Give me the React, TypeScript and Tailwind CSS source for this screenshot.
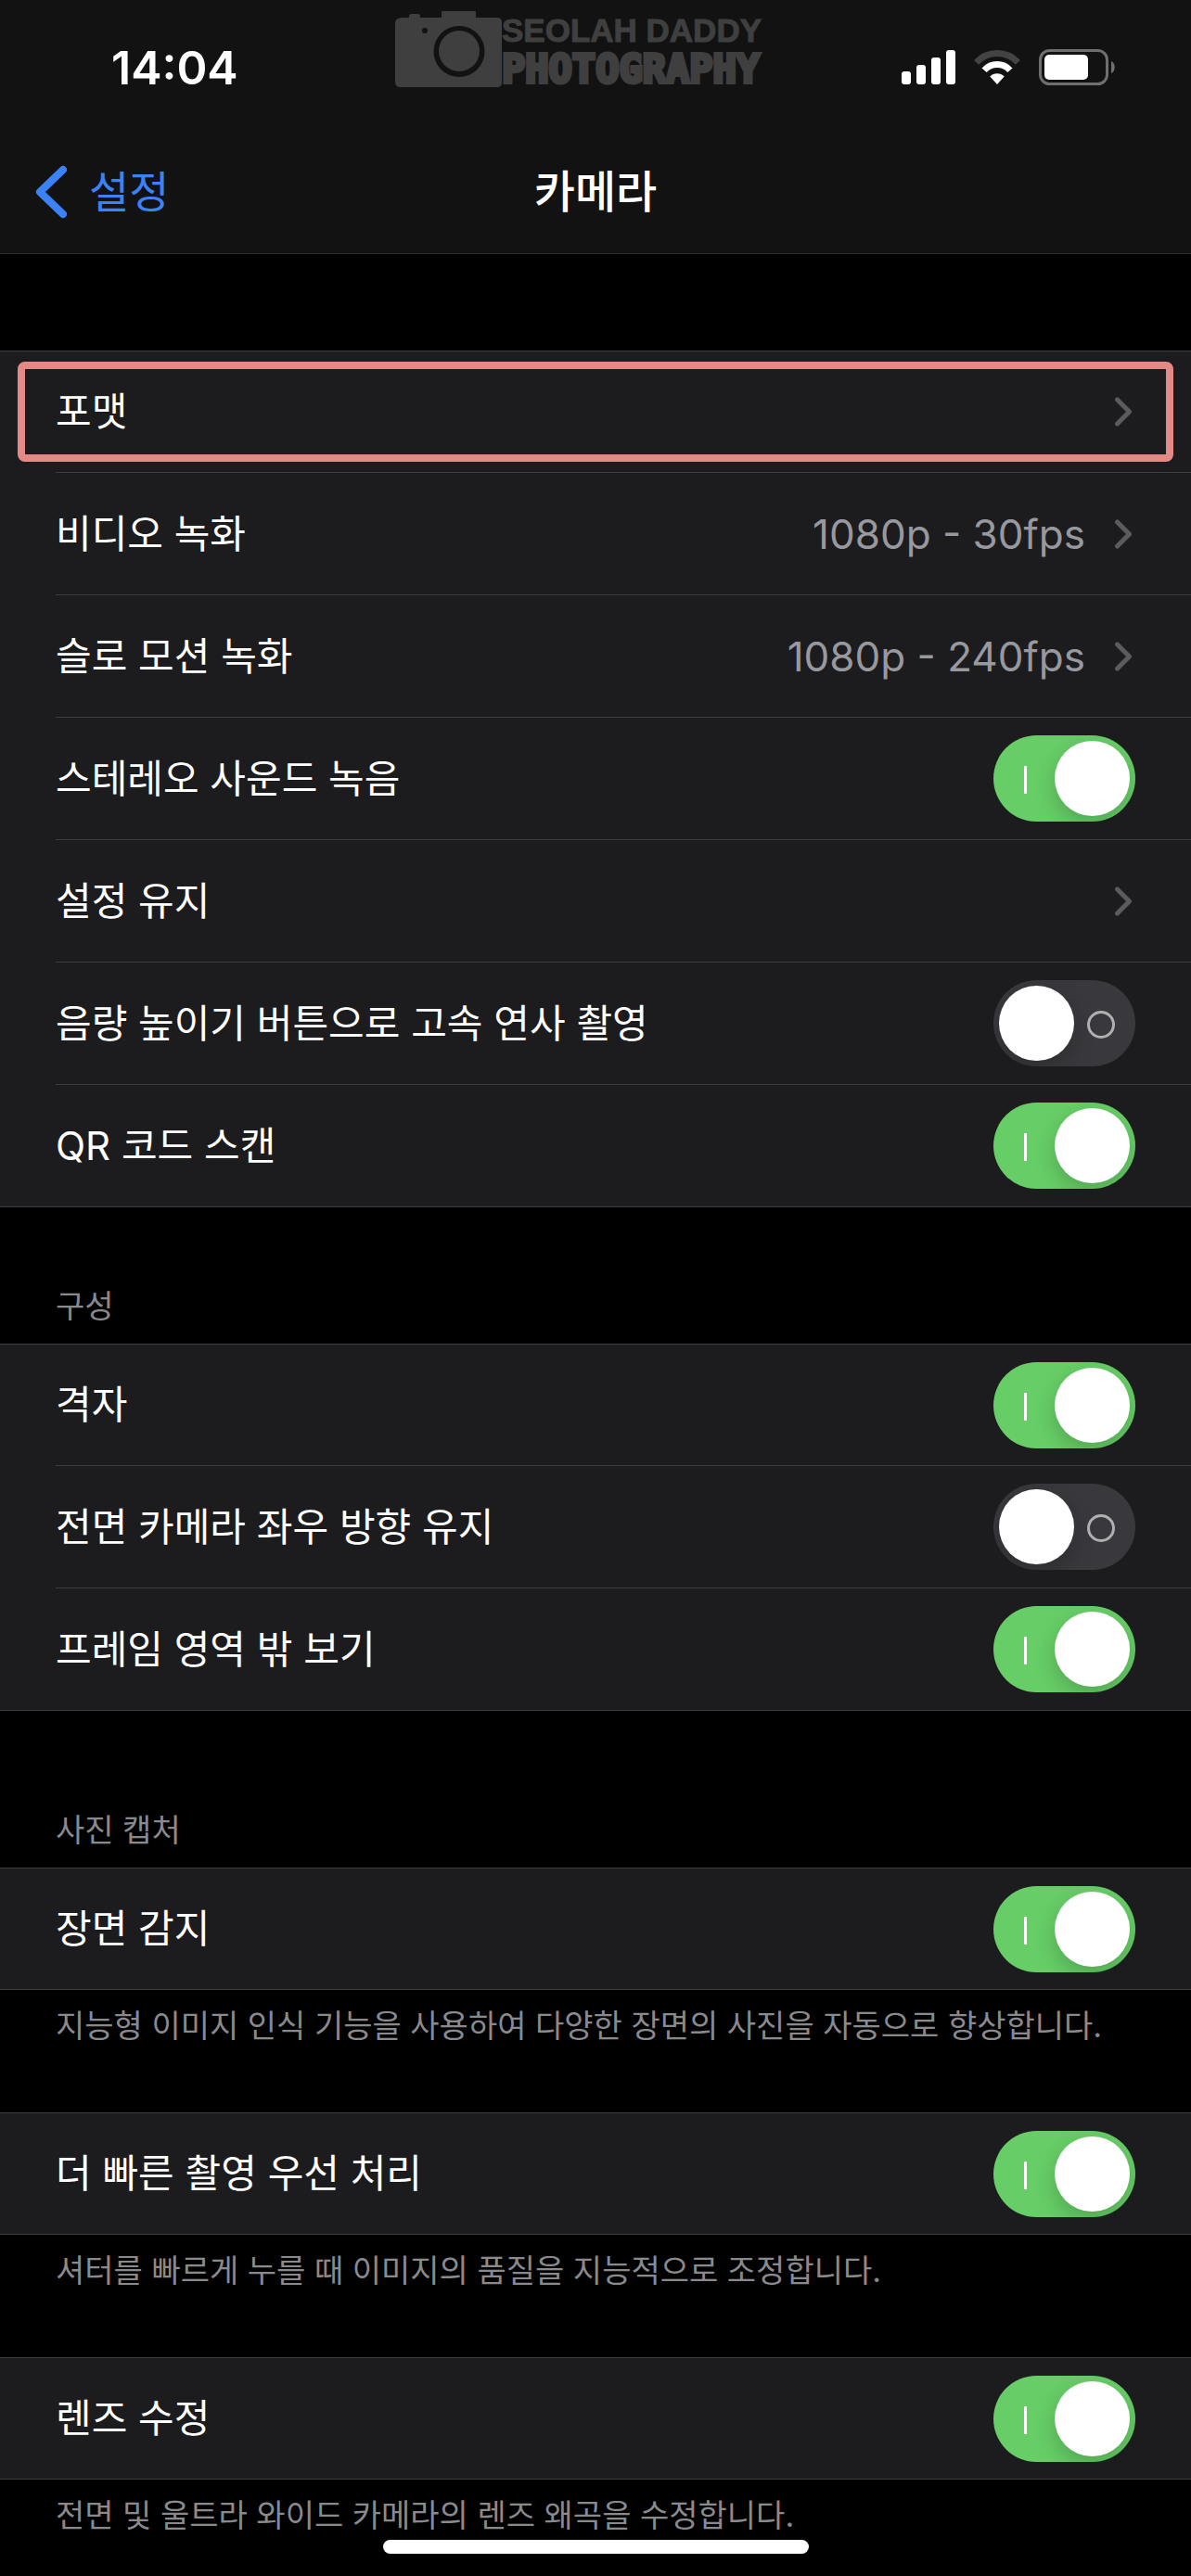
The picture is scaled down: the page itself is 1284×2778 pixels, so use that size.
import { useId, useState, type ReactNode } from 'react';

type RowProps = {
  first?: boolean;
  last?: boolean;
  children: ReactNode;
};

// One list line: outer hairlines run full width, inner ones start at the label
function Row({ first = false, last = false, children }: RowProps) {
  return (
    <li
      className={`relative flex min-h-[132px] bg-[#1c1c1e] pl-[60px] border-[#3d3d41] ${first ? 'border-t' : ''} ${
        last ? 'border-b' : ''
      }`}
    >
      <div
        className={`flex flex-1 items-center justify-between pr-[60px] border-[#3d3d41] ${last ? '' : 'border-b'}`}
      >
        {children}
      </div>
    </li>
  );
}

function Chevron() {
  return (
    <svg width="22" height="34" viewBox="0 0 22 34" fill="none" aria-hidden="true">
      <path
        d="M2.5 4 L15.5 17 L2.5 30"
        stroke="#5b5b5f"
        strokeWidth="5"
        strokeLinecap="round"
        strokeLinejoin="round"
      />
    </svg>
  );
}

function LinkRow({
  label,
  value,
  first,
  last,
  highlighted = false,
}: {
  label: string;
  value?: string;
  first?: boolean;
  last?: boolean;
  highlighted?: boolean;
}) {
  return (
    <Row first={first} last={last}>
      <a href="#" className="flex flex-1 items-center justify-between text-white">
        <span>{label}</span>
        <span className="flex items-center gap-8">
          {value && <span className="text-[44px] text-[#98989f]">{value}</span>}
          <Chevron />
        </span>
      </a>
      {highlighted && (
        <div className="pointer-events-none absolute inset-x-[19px] top-[11px] h-[108px] rounded-lg border-8 border-[#e58987]" />
      )}
    </Row>
  );
}

function SwitchRow({
  label,
  defaultOn = false,
  first,
  last,
}: {
  label: string;
  defaultOn?: boolean;
  first?: boolean;
  last?: boolean;
}) {
  const id = useId();
  const [on, setOn] = useState(defaultOn);

  return (
    <Row first={first} last={last}>
      <label htmlFor={id}>{label}</label>
      <span
        className={`relative flex h-[93px] w-[153px] shrink-0 items-center overflow-hidden rounded-full p-[6px] ${
          on ? 'bg-[#67ce67] justify-end' : 'bg-[#39393d] justify-start'
        }`}
      >
        <input
          id={id}
          type="checkbox"
          role="switch"
          checked={on}
          onChange={(e) => setOn(e.target.checked)}
          className="absolute inset-0 z-10 size-full cursor-pointer opacity-0"
        />
        {on ? (
          <span className="absolute left-[33px] top-[33px] h-[30px] w-[3px] bg-white" />
        ) : (
          <span className="absolute right-[22px] top-[33px] size-[30px] rounded-full border-[3px] border-[#b0b0b2]" />
        )}
        <span className="size-[81px] rounded-full bg-white shadow-[0_9px_24px_rgba(0,0,0,0.2)]" />
      </span>
    </Row>
  );
}

function SectionTitle({ children }: { children: ReactNode }) {
  return <h2 className="px-[60px] pb-4 text-[34px] leading-[48px] text-[#8a8a8e]">{children}</h2>;
}

function Note({ children }: { children: ReactNode }) {
  return <p className="px-[60px] pt-[15px] text-[34px] leading-[48px] text-[#8a8a8e]">{children}</p>;
}

function Watermark() {
  return (
    <svg width="410" height="90" viewBox="0 0 410 90" fill="#3f3f3f" aria-hidden="true">
      <path
        fillRule="evenodd"
        d="M8 10 H15 V8 Q15 6 18 6 H24 Q27 6 27 8 V10 H50 V4 Q50 3 52 3 H85 Q87 3 87 4 V10 H110 Q115 10 115 15 V80 Q115 85 110 85 H6 Q0 85 0 79 V16 Q0 10 8 10 Z M32 21 A3 3 0 1 0 32 27 A3 3 0 1 0 32 21 Z M69 19 A27.5 27.5 0 1 0 69 74 A27.5 27.5 0 1 0 69 19 Z"
      />
      <circle cx="69" cy="46" r="22" />
      <text
        x="115"
        y="36"
        fontSize="35"
        stroke="#3f3f3f"
        className="font-['Liberation_Sans',sans-serif] font-bold"
      >
        SEOLAH DADDY
      </text>
      <text
        x="115"
        y="80"
        fontSize="42"
        stroke="#3f3f3f"
        strokeWidth="4"
        className="font-['DejaVu_Sans_Mono',monospace] font-bold"
      >
        PHOTOGRAPHY
      </text>
    </svg>
  );
}

function StatusIcons() {
  return (
    <div className="flex items-center gap-5">
      <svg width="58" height="40" viewBox="0 0 58 40" fill="#fff" aria-label="신호">
        <rect x="0" y="24" width="10" height="14" rx="3" />
        <rect x="16" y="17" width="10" height="21" rx="3" />
        <rect x="32" y="9" width="10" height="29" rx="3" />
        <rect x="48" y="1" width="10" height="37" rx="3" />
      </svg>
      <svg width="50" height="40" viewBox="0 0 50 40" fill="none" aria-label="Wi-Fi">
        <path d="M2.6 14.3 A30.5 30.5 0 0 1 47.4 14.3" stroke="#434343" strokeWidth="7" />
        <path d="M11.1 22.8 A18.5 18.5 0 0 1 38.9 22.8" stroke="#fff" strokeWidth="7" />
        <path d="M25 38 L17.3 29.5 A11 11 0 0 1 32.7 29.5 Z" fill="#fff" />
      </svg>
      <svg width="82" height="40" viewBox="0 0 82 40" fill="none" aria-label="배터리">
        <rect x="1.5" y="1.5" width="72" height="36" rx="10" stroke="#6f6f6f" strokeWidth="3" />
        <rect x="6" y="6" width="47" height="27" rx="5" fill="#fff" />
        <path d="M78 13 C83 15 83 24 78 26 Z" fill="#6f6f6f" />
      </svg>
    </div>
  );
}

export default function App() {
  return (
    <div className="min-h-screen bg-black font-['Inter','Noto_Sans_CJK_KR',sans-serif] text-[42px] leading-[60px] text-white">
      <header className="border-b border-[#2b2b2d] bg-[#121212]">
        <div className="relative flex h-[140px] items-center justify-between pl-[120px] pr-[82px] pt-[6px]">
          <time className="text-[50px] font-semibold">14:04</time>
          <div className="absolute left-[426px] top-[9px]">
            <Watermark />
          </div>
          <StatusIcons />
        </div>
        <nav className="grid h-[133px] grid-cols-3 items-center px-[38px]">
          <a href="#" className="flex items-center gap-6 text-[47px] text-[#3b82f7]">
            <svg width="34" height="58" viewBox="0 0 34 58" fill="none" aria-hidden="true">
              <path
                d="M30 5 L5 29 L30 53"
                stroke="currentColor"
                strokeWidth="8"
                strokeLinecap="round"
                strokeLinejoin="round"
              />
            </svg>
            설정
          </a>
          <h1 className="text-center text-[48px] font-medium">카메라</h1>
        </nav>
      </header>

      <main>
        <ul className="mt-[104px]">
          <LinkRow label="포맷" first highlighted />
          <LinkRow label="비디오 녹화" value="1080p - 30fps" />
          <LinkRow label="슬로 모션 녹화" value="1080p - 240fps" />
          <SwitchRow label="스테레오 사운드 녹음" defaultOn />
          <LinkRow label="설정 유지" />
          <SwitchRow label="음량 높이기 버튼으로 고속 연사 촬영" />
          <SwitchRow label="QR 코드 스캔" defaultOn last />
        </ul>

        <section className="mt-[83px]">
          <SectionTitle>구성</SectionTitle>
          <ul>
            <SwitchRow label="격자" defaultOn first />
            <SwitchRow label="전면 카메라 좌우 방향 유지" />
            <SwitchRow label="프레임 영역 밖 보기" defaultOn last />
          </ul>
        </section>

        <section className="mt-[105px]">
          <SectionTitle>사진 캡처</SectionTitle>
          <ul>
            <SwitchRow label="장면 감지" defaultOn first last />
          </ul>
          <Note>지능형 이미지 인식 기능을 사용하여 다양한 장면의 사진을 자동으로 향상합니다.</Note>
        </section>

        <section className="mt-[69px]">
          <ul>
            <SwitchRow label="더 빠른 촬영 우선 처리" defaultOn first last />
          </ul>
          <Note>셔터를 빠르게 누를 때 이미지의 품질을 지능적으로 조정합니다.</Note>
        </section>

        <section className="mt-[69px]">
          <ul>
            <SwitchRow label="렌즈 수정" defaultOn first last />
          </ul>
          <Note>전면 및 울트라 와이드 카메라의 렌즈 왜곡을 수정합니다.</Note>
        </section>
      </main>

      {/* Home indicator */}
      <div className="fixed inset-x-0 bottom-6 mx-auto h-[15px] w-[459px] rounded-full bg-white" />
    </div>
  );
}
